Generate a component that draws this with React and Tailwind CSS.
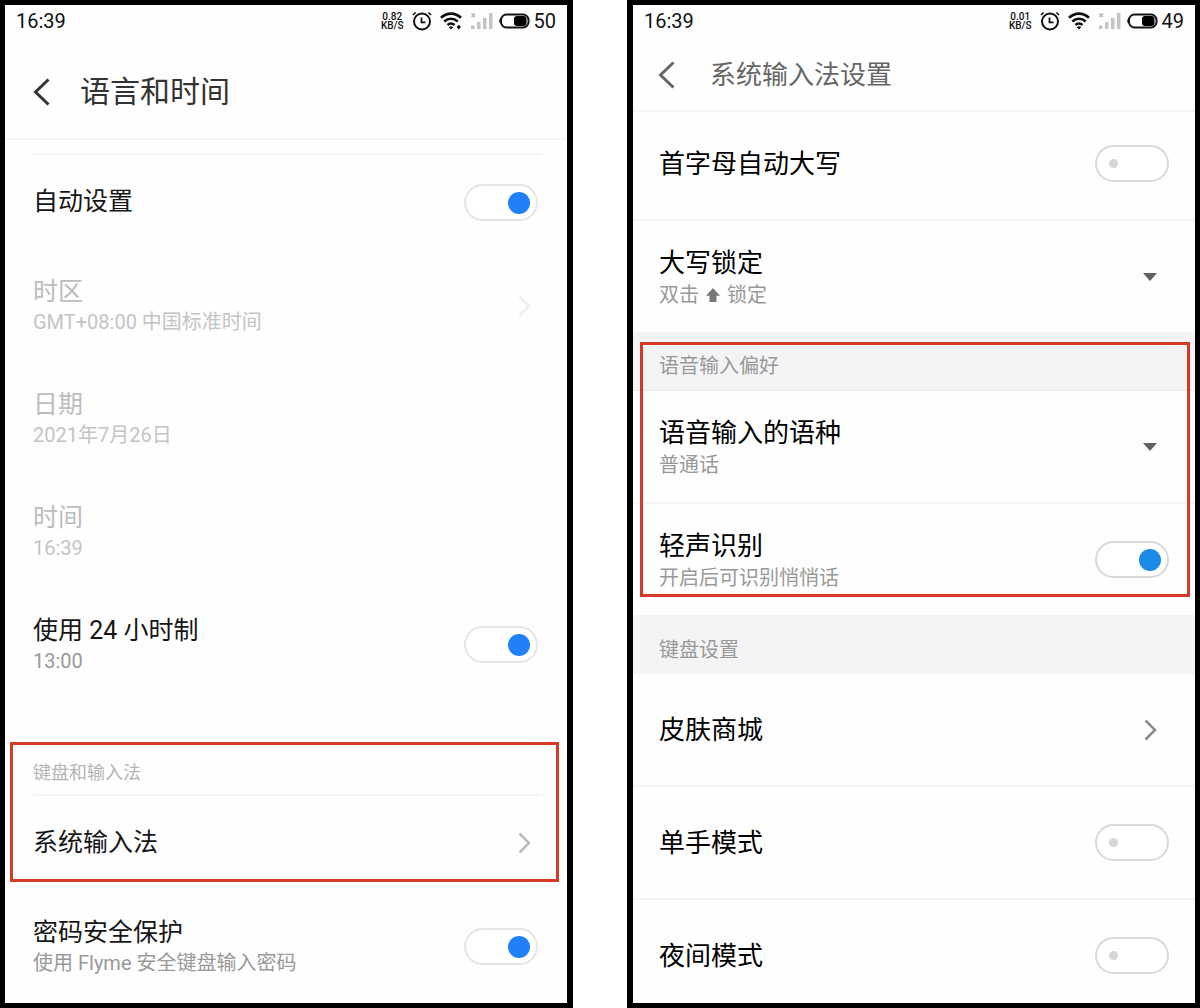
import React, { useState } from 'react';

const AlarmIcon = () => (
  <svg width="22" height="20" viewBox="0 0 22 20" fill="none" stroke="#111" aria-hidden="true">
    <circle cx="11" cy="10.5" r="8" strokeWidth="2" />
    <path d="M10.5 6.5v4.8h4" strokeWidth="1.8" />
    <path d="M2 4 4.6 1.5M20 4 17.4 1.5" strokeWidth="1.6" />
  </svg>
);

const WifiIcon = ({ dot }) => (
  <svg width="22" height="18" viewBox="0 0 22 18" fill="none" stroke="#111" aria-hidden="true">
    <path d="M1 5.8C6.8.2 15.2.2 21 5.8" strokeWidth="2.6" />
    <path d="M4.3 9.5c3.9-3.7 9.5-3.7 13.4 0" strokeWidth="2.6" />
    <path d="M7.5 13c2-1.9 5-1.9 7 0" strokeWidth="2.5" />
    <path d="m8.8 15.2 2.2 2.4 2.2-2.4a3.2 3.2 0 0 0-4.4 0z" fill="#111" stroke="none" />
    {dot && <path d="m18.8 12.8 2.2 2.3-2.2 2.3-2.2-2.300z" fill="#111" stroke="none" />}
  </svg>
);

const SignalIcon = () => (
  <svg width="24" height="18" viewBox="0 0 24 18" fill="#c4c4c4" aria-hidden="true">
    <path d="M1.5 1.5 5 5M5 1.5 1.5 5" stroke="#b5b5b5" strokeWidth="1.5" />
    <rect x="1" y="13.5" width="3.5" height="3.5" />
    <rect x="7" y="10" width="3.5" height="7" />
    <rect x="13" y="6" width="3.5" height="11" />
    <rect x="19" y="1" width="3.5" height="16" />
  </svg>
);

const BatteryIcon = () => (
  <svg width="32" height="16" viewBox="0 0 32 16" fill="none" aria-hidden="true">
    <path d="M2.5 5.5C.8 6 .8 10 2.5 10.5z" fill="#111" />
    <rect x="3" y="1.5" width="27.5" height="13" rx="5.5" stroke="#111" strokeWidth="2" />
    <rect x="16" y="3" width="12.5" height="10" rx="3" fill="#000" />
  </svg>
);

const StatusBar = ({ speed, battery, dot }) => (
  <div className="flex h-8 items-center justify-between px-[11px] text-[20px] leading-8 text-[#111]">
    <span>16:39</span>
    <div className="flex items-center">
      <span className="mr-[7px] text-center text-[10px] font-medium leading-[9px]">
        {speed}
        <br />
        KB/S
      </span>
      <AlarmIcon />
      <span className="ml-[7px] mr-2"><WifiIcon dot={dot} /></span>
      <SignalIcon />
      <span className="mx-1"><BatteryIcon /></span>
      <span>{battery}</span>
    </div>
  </div>
);

const BackButton = ({ className }) => (
  <button type="button" aria-label="返回" className={className}>
    <svg width="18" height="28" viewBox="0 0 18 28" fill="none" stroke="currentColor" strokeWidth="3">
      <path d="M15.5 1.5 2.5 14l13 12.5" />
    </svg>
  </button>
);

const Chevron = ({ className }) => (
  <svg width="13" height="22" viewBox="0 0 13 22" fill="none" stroke="currentColor" strokeWidth="2.5" className={className} aria-hidden="true">
    <path d="m1.5 1.5 9.5 9.5-9.5 9.5" />
  </svg>
);

const Caret = () => (
  <svg width="14" height="8" viewBox="0 0 14 8" fill="#606060" className="pointer-events-none mr-3" aria-hidden="true">
    <path d="M0 0h14L7 8z" />
  </svg>
);

const ShiftIcon = () => (
  <svg width="14" height="14" viewBox="0 0 14 14" fill="#777" className="mx-[7px]" aria-hidden="true">
    <path d="M7 0 14 7.8h-3.500V14h-7V7.800H0z" />
  </svg>
);

const switchBase =
  "relative h-[37px] w-[74px] shrink-0 cursor-pointer appearance-none rounded-full border-2 bg-white before:absolute before:left-3 before:top-3 before:size-[9px] before:rounded-full before:bg-[#d8d6d9] checked:before:left-auto checked:before:right-[6px] checked:before:top-[6px] checked:before:size-[22px]";

const Switch = ({ id, defaultChecked, className }) => {
  const [checked, setChecked] = useState(!!defaultChecked);
  return (
    <input
      type="checkbox"
      role="switch"
      id={id}
      checked={checked}
      onChange={(e) => setChecked(e.target.checked)}
      className={`${switchBase} ${className}`}
    />
  );
};

const FlymeSwitch = (props) => (
  <Switch {...props} className="border-[#e6e6e6] checked:before:bg-[#2080f7]" />
);

const ImeSwitch = (props) => (
  <Switch {...props} className="border-[#d9d9d9] checked:before:bg-[#1a8ce8]" />
);

const FlymeRow = ({ id, title, sub, disabled, tall = true, children }) => (
  <div className={`flex items-center justify-between pl-7 pr-[29px] ${tall ? 'min-h-[113px]' : 'min-h-[94px]'}`}>
    <div>
      <label htmlFor={id} className={`block text-[25px] leading-8 ${disabled ? 'text-[#bdbdbd]' : 'text-[#161616]'}`}>
        {title}
      </label>
      {sub && <p className={`text-[20px] leading-7 ${disabled ? 'text-[#c4c4c4]' : 'text-[#999]'}`}>{sub}</p>}
    </div>
    {children}
  </div>
);

const ImeRow = ({ id, title, sub, className = 'min-h-[113px] border-b-2', children }) => (
  <div className={`flex items-center justify-between border-[#f3f3f4] px-[26px] ${className}`}>
    <div className="grow">
      <label htmlFor={id} className="block text-[26px] leading-9 text-black">{title}</label>
      {sub && <div className="text-[20px] leading-7 text-[#999]">{sub}</div>}
    </div>
    {children}
  </div>
);

const CapsLockRow = () => {
  const [mode, setMode] = useState('double');
  return (
    <ImeRow
      id="capslock"
      title="大写锁定"
      sub={
        <div className="relative flex items-center">
          {mode === 'double' ? <>双击<ShiftIcon />锁定</> : '关闭'}
          {/* native picker sits over the label so the arrow can be drawn inline */}
          <select
            id="capslock"
            value={mode}
            onChange={(e) => setMode(e.target.value)}
            className="absolute inset-0 cursor-pointer opacity-0"
          >
            <option value="double">双击锁定</option>
            <option value="off">关闭</option>
          </select>
        </div>
      }
    >
      <Caret />
    </ImeRow>
  );
};

const VoiceLanguageRow = () => (
  <ImeRow
    id="lang"
    title="语音输入的语种"
    sub={
      <select id="lang" className="block w-full cursor-pointer appearance-none bg-transparent">
        <option>普通话</option>
        <option>粤语</option>
        <option>英语</option>
      </select>
    }
  >
    <Caret />
  </ImeRow>
);

const LanguageAndTime = () => (
  <section className="min-w-0 flex-1 border-y-[5px] border-l-[5px] border-r-[6px] border-black bg-[#fefefe]">
    <StatusBar speed="0.82" battery="50" dot />
    <header className="flex h-[103px] items-center border-b-2 border-[#f5f5f5] pl-7 pt-2 text-[#333]">
      <BackButton className="mr-[29px] cursor-pointer" />
      <h1 className="text-[30px] leading-10">语言和时间</h1>
    </header>
    <div className="ml-7 mr-[25px] h-[15px] border-b-2 border-[#f5f5f5]" />
    <FlymeRow id="auto" title="自动设置" tall={false}>
      <FlymeSwitch id="auto" defaultChecked />
    </FlymeRow>
    <FlymeRow title="时区" sub="GMT+08:00 中国标准时间" disabled>
      <Chevron className="mr-[7px] text-[#eee]" />
    </FlymeRow>
    <FlymeRow title="日期" sub="2021年7月26日" disabled />
    <FlymeRow title="时间" sub="16:39" disabled />
    <FlymeRow id="hour24" title="使用 24 小时制" sub="13:00">
      <FlymeSwitch id="hour24" defaultChecked />
    </FlymeRow>
    <div className="relative pt-[56px]">
      <h2 className="ml-7 mr-[25px] border-b-2 border-[#f5f5f5] pb-[5px] text-[18px] leading-8 text-[#b5b5b5]">键盘和输入法</h2>
      <FlymeRow title={<a href="#ime">系统输入法</a>} tall={false}>
        <Chevron className="mr-[7px] text-[#bbb]" />
      </FlymeRow>
      <div className="pointer-events-none absolute bottom-2 left-[5px] right-2 top-[41px] border-[3px] border-[#d63a26]" />
    </div>
    <FlymeRow id="secure" title="密码安全保护" sub="使用 Flyme 安全键盘输入密码">
      <FlymeSwitch id="secure" defaultChecked />
    </FlymeRow>
  </section>
);

const ImeSettings = () => (
  <section id="ime" className="min-w-0 flex-1 border-y-[5px] border-l-[6px] border-r-[5px] border-black bg-[#fefefe]">
    <StatusBar speed="0.01" battery="49" />
    <header className="flex h-[75px] items-center border-b-2 border-[#f3f3f4] pl-[25px] pt-[2px] text-[#666]">
      <BackButton className="mr-[34px] cursor-pointer" />
      <h1 className="text-[26px] leading-9">系统输入法设置</h1>
    </header>
    <ImeRow id="caps" title="首字母自动大写" className="min-h-[109px] border-b-2 pb-1">
      <ImeSwitch id="caps" />
    </ImeRow>
    <CapsLockRow />
    <div className="relative">
      <h2 className="border-b border-[#ececee] bg-[#f4f4f7] px-[26px] pb-2 pt-4 text-[20px] leading-8 text-[#999]">语音输入偏好</h2>
      <VoiceLanguageRow />
      <ImeRow id="whisper" title="轻声识别" sub="开启后可识别悄悄话">
        <ImeSwitch id="whisper" defaultChecked />
      </ImeRow>
      <div className="pointer-events-none absolute bottom-5 left-[7px] right-[5px] top-2 border-[3px] border-[#d63a26]" />
    </div>
    <h2 className="bg-[#f4f4f7] px-[26px] pb-2 pt-[17px] text-[20px] leading-8 text-[#999]">键盘设置</h2>
    <ImeRow title={<a href="#skins">皮肤商城</a>}>
      <Chevron className="mr-3 text-[#8c8c8c]" />
    </ImeRow>
    <ImeRow id="onehand" title="单手模式">
      <ImeSwitch id="onehand" />
    </ImeRow>
    <ImeRow id="night" title="夜间模式" className="min-h-[103px] pt-2">
      <ImeSwitch id="night" />
    </ImeRow>
  </section>
);

const App = () => (
  <main className="flex min-h-screen gap-[54px] bg-white font-['Roboto','Noto_Sans_CJK_SC','DejaVu_Sans',sans-serif]" lang="zh-CN">
    <LanguageAndTime />
    <ImeSettings />
  </main>
);

export default App;
